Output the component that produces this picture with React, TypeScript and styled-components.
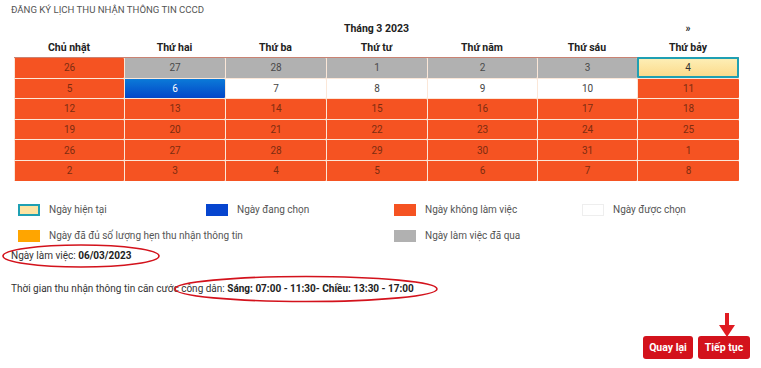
import React from "react";
import styled, { createGlobalStyle, css } from "styled-components";

const Global = createGlobalStyle`
  html, body { margin: 0; padding: 0; background: #fff; }
  body { font-family: Roboto, "Noto Sans", Arial, sans-serif; }
`;

const Page = styled.div`
  position: relative;
  width: 761px;
  height: 368px;
  overflow: hidden;
  font-size: 10px;
  color: #333;
`;

const Title = styled.div`
  height: 20px;
  line-height: 20px;
  padding-left: 11px;
  font-size: 9.6px;
  color: #555;
  text-transform: uppercase;
`;

const COLS = "110px 101px 101px 101px 110px 100px 102px";

const Calendar = styled.div`
  margin-left: 14px;
  width: 725px;
`;

const MonthBar = styled.div`
  display: grid;
  grid-template-columns: ${COLS};
  height: 17px;
  align-items: center;
  font-weight: 700;
  font-size: 10.5px;
  color: #222;
`;

const MonthLabel = styled.div`
  grid-row: 1;
  grid-column: 1 / -1;
  text-align: center;
`;

const NextLink = styled.div`
  grid-row: 1;
  grid-column: 7;
  text-align: center;
  font-size: 10px;
`;

const HeadRow = styled.div`
  display: grid;
  grid-template-columns: ${COLS};
  height: 20px;
  align-items: center;
  font-weight: 700;
  font-size: 10.5px;
  color: #222;
`;

const HeadCell = styled.div`
  text-align: center;
`;

const DaysGrid = styled.div`
  display: grid;
  grid-template-columns: ${COLS};
  grid-auto-rows: 19.6px;
  row-gap: 1px;
  background: #fbe7d8;
  border-top: 1px solid #c98272;
`;

type Kind = "off" | "past" | "sel" | "free" | "today";

const kindStyles: Record<Kind, ReturnType<typeof css>> = {
  off: css`
    background: #f55322;
    color: #7c2c10;
  `,
  past: css`
    background: #b1b1b1;
    color: #4a4a4a;
  `,
  sel: css`
    background: linear-gradient(#0b7ad8, #0346c8);
    color: #fff;
  `,
  free: css`
    background: #fff;
    color: #444;
  `,
  today: css`
    background: linear-gradient(#fdeeb5, #fcdb8c);
    color: #333;
    border: 2px solid #1fa0b3;
    margin-top: -1px;
  `,
};

const DayCell = styled.div<{ $kind: Kind }>`
  display: flex;
  align-items: center;
  justify-content: center;
  font-size: 10px;
  border-left: 1px solid #fbe7d8;
  border-radius: 1px;
  box-sizing: border-box;
  ${(p) => kindStyles[p.$kind]}
`;

const Legend = styled.div`
  display: grid;
  grid-template-columns: repeat(4, 188px);
  grid-auto-rows: 20px;
  row-gap: 6px;
  margin-top: 19px;
  padding-left: 18px;
`;

const LegendItem = styled.div`
  display: flex;
  align-items: center;
  gap: 9px;
  color: #555;
  font-size: 10px;
  white-space: nowrap;
`;

const Swatch = styled.span<{ $bg: string; $border?: string }>`
  display: inline-block;
  flex: none;
  width: 22px;
  height: 12px;
  box-sizing: border-box;
  background: ${(p) => p.$bg};
  border: ${(p) => (p.$border ? `2px solid ${p.$border}` : "none")};
  ${(p) => (p.$bg === "#fff" ? "border: 1px solid #eee;" : "")}
`;

const InfoLine = styled.div<{ $top?: number }>`
  height: 20px;
  line-height: 20px;
  padding-left: 11px;
  margin-top: ${(p) => p.$top ?? 0}px;
  font-size: 10px;
  color: #333;
  white-space: nowrap;
  b {
    color: #222;
    font-weight: 700;
  }
`;

const ButtonBar = styled.div`
  display: flex;
  justify-content: flex-end;
  gap: 5px;
  margin-top: 37px;
  padding-right: 11px;
`;

const Button = styled.button<{ $w: number }>`
  width: ${(p) => p.$w}px;
  height: 23px;
  padding: 0;
  border: none;
  border-radius: 3px;
  background: #d3121c;
  color: #fff;
  font-family: Roboto, Arial, sans-serif;
  font-weight: 700;
  font-size: 10.5px;
`;

const Overlay = styled.svg`
  position: absolute;
  left: 0;
  top: 0;
  pointer-events: none;
`;

const headers = ["Chủ nhật", "Thứ hai", "Thứ ba", "Thứ tư", "Thứ năm", "Thứ sáu", "Thứ bảy"];

const weeks: [number, Kind][][] = [
  [[26, "off"], [27, "past"], [28, "past"], [1, "past"], [2, "past"], [3, "past"], [4, "today"]],
  [[5, "off"], [6, "sel"], [7, "free"], [8, "free"], [9, "free"], [10, "free"], [11, "off"]],
  [[12, "off"], [13, "off"], [14, "off"], [15, "off"], [16, "off"], [17, "off"], [18, "off"]],
  [[19, "off"], [20, "off"], [21, "off"], [22, "off"], [23, "off"], [24, "off"], [25, "off"]],
  [[26, "off"], [27, "off"], [28, "off"], [29, "off"], [30, "off"], [31, "off"], [1, "off"]],
  [[2, "off"], [3, "off"], [4, "off"], [5, "off"], [6, "off"], [7, "off"], [8, "off"]],
];

export default function App() {
  return (
    <Page>
      <Global />
      <Title>Đăng ký lịch thu nhận thông tin CCCD</Title>
      <Calendar>
        <MonthBar>
          <MonthLabel>Tháng 3 2023</MonthLabel>
          <NextLink>»</NextLink>
        </MonthBar>
        <HeadRow>
          {headers.map((h) => (
            <HeadCell key={h}>{h}</HeadCell>
          ))}
        </HeadRow>
        <DaysGrid>
          {weeks.flatMap((w, i) =>
            w.map(([d, k], j) => (
              <DayCell key={`${i}-${j}`} $kind={k}>
                {d}
              </DayCell>
            ))
          )}
        </DaysGrid>
      </Calendar>
      <Legend>
        <LegendItem>
          <Swatch $bg="#fde4a2" $border="#1fa0b3" />
          Ngày hiện tại
        </LegendItem>
        <LegendItem>
          <Swatch $bg="#0645cf" />
          Ngày đang chọn
        </LegendItem>
        <LegendItem>
          <Swatch $bg="#f55322" />
          Ngày không làm việc
        </LegendItem>
        <LegendItem>
          <Swatch $bg="#fff" />
          Ngày được chọn
        </LegendItem>
        <LegendItem>
          <Swatch $bg="#ffa500" />
          Ngày đã đủ số lượng hẹn thu nhận thông tin
        </LegendItem>
        <LegendItem />
        <LegendItem>
          <Swatch $bg="#b1b1b1" />
          Ngày làm việc đã qua
        </LegendItem>
      </Legend>
      <InfoLine>
        Ngày làm việc: <b>06/03/2023</b>
      </InfoLine>
      <InfoLine $top={13}>
        Thời gian thu nhận thông tin căn cước công dân: <b>Sáng: 07:00 - 11:30- Chiều: 13:30 - 17:00</b>
      </InfoLine>
      <ButtonBar>
        <Button $w={50}>Quay lại</Button>
        <Button $w={52}>Tiếp tục</Button>
      </ButtonBar>
      <Overlay width="761" height="368" viewBox="0 0 761 368">
        <ellipse cx="81" cy="256" rx="78" ry="11" fill="none" stroke="#d3121c" strokeWidth="1.6" />
        <ellipse cx="306" cy="289" rx="131" ry="12.5" fill="none" stroke="#d3121c" strokeWidth="1.6" />
        <rect x="725" y="313" width="4" height="14" fill="#e01b22" />
        <polygon points="719,325 735,325 727,337" fill="#e01b22" />
      </Overlay>
    </Page>
  );
}
